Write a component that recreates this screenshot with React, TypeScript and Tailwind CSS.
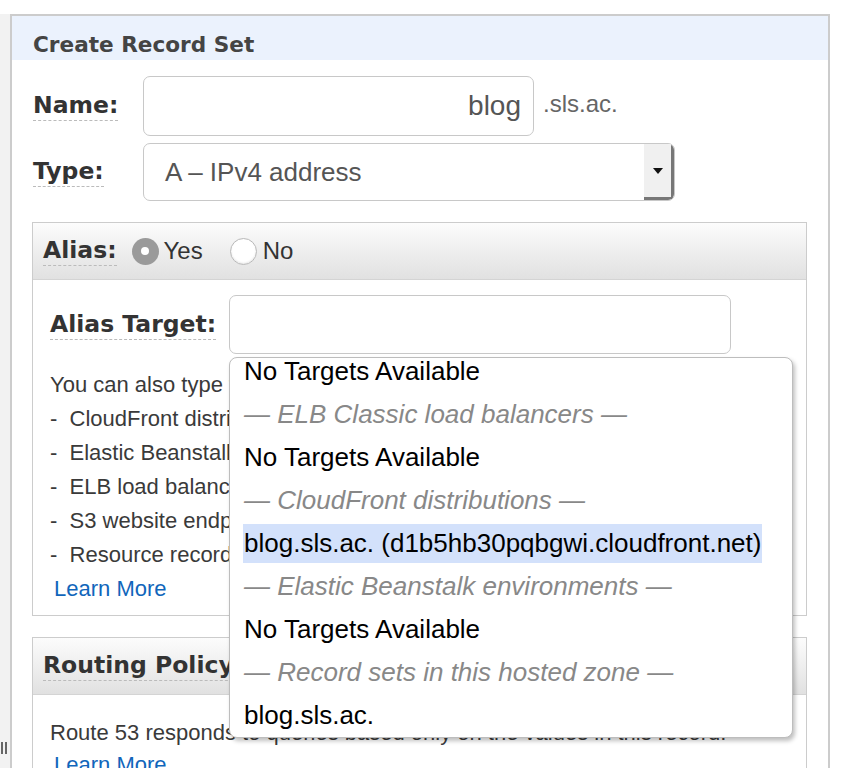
import React from "react";

const bold = { fontFamily: '"DejaVu Sans", Verdana, sans-serif' };
const sans = { fontFamily: '"Liberation Sans", Arial, Helvetica, sans-serif' };

function Label({ children }: { children: React.ReactNode }) {
  return (
    <span
      style={bold}
      className="inline-block whitespace-nowrap border-b border-dashed border-[#bbb] pb-[1px] text-[23.5px] font-bold leading-[28px] text-[#333]"
    >
      {children}
    </span>
  );
}

function BoxHeader({ children }: { children: React.ReactNode }) {
  return (
    <div className="flex h-[57px] items-center border-b border-[#d4d4d4] bg-gradient-to-b from-[#fcfcfc] to-[#e1e1e1] pl-[10px]">
      {children}
    </div>
  );
}

const options: { text: string; group?: boolean; selected?: boolean }[] = [
  { text: "No Targets Available" },
  { text: "— ELB Classic load balancers —", group: true },
  { text: "No Targets Available" },
  { text: "— CloudFront distributions —", group: true },
  { text: "blog.sls.ac. (d1b5hb30pqbgwi.cloudfront.net)", selected: true },
  { text: "— Elastic Beanstalk environments —", group: true },
  { text: "No Targets Available" },
  { text: "— Record sets in this hosted zone —", group: true },
  { text: "blog.sls.ac." },
];

export default function App() {
  return (
    <div style={sans} className="flex h-[768px] w-[850px] overflow-hidden bg-white pt-[14px]">
      <div className="flex w-[10px] flex-col bg-[#f2f2f2] pt-[728px]">
        <div className="flex gap-[2px] pl-[1px]">
          <span className="h-[12px] w-[2px] bg-[#666]" />
          <span className="h-[12px] w-[2px] bg-[#666]" />
        </div>
      </div>

      <div className="relative w-[820px] border-x-2 border-t-2 border-[#cccccc]">
        <div className="flex h-[44px] items-center bg-[#ebf2fd] pl-[21px] pt-[14px]">
          <span style={bold} className="text-[21.6px] font-bold text-[#444]">
            Create Record Set
          </span>
        </div>

        <div className="px-[20px] pt-[16px]">
          <div className="flex items-start">
            <div className="flex h-[60px] w-[111px] items-center pl-[1px]">
              <Label>Name:</Label>
            </div>
            <div className="flex h-[60px] w-[391px] items-center justify-end rounded-[7px] border border-[#c8c8c8] pr-[12px] text-[28px] text-[#555]">
              blog
            </div>
            <span className="ml-[9px] pt-[14px] text-[24px] leading-[28px] text-[#666]">.sls.ac.</span>
          </div>

          <div className="mt-[7px] flex items-start">
            <div className="flex h-[58px] w-[111px] items-center pl-[1px]">
              <Label>Type:</Label>
            </div>
            <div className="flex h-[58px] w-[532px] items-stretch overflow-hidden rounded-[7px] border border-[#c8c8c8]">
              <div className="flex flex-1 items-center pl-[21px] text-[26px] text-[#555]">A – IPv4 address</div>
              <div className="flex w-[30px] items-center justify-center border-b-[3px] border-r-[3px] border-[#777] bg-[#f0f0f0]">
                <svg width="10" height="6" viewBox="0 0 10 6">
                  <path d="M0 0 L10 0 L5 6 Z" fill="#111" />
                </svg>
              </div>
            </div>
          </div>

          <div className="mt-[21px] w-[775px] border border-[#cccccc]">
            <BoxHeader>
              <Label>Alias:</Label>
              <span className="ml-[15px] flex h-[27px] w-[27px] items-center justify-center rounded-full bg-[#9a9a9a]">
                <span className="h-[8px] w-[8px] rounded-full bg-white" />
              </span>
              <span className="ml-[5px] text-[24px] text-[#333]">Yes</span>
              <span className="ml-[27px] h-[27px] w-[27px] rounded-full border border-[#b8b8b8] bg-white shadow-[inset_0_-1px_2px_rgba(0,0,0,0.1)]" />
              <span className="ml-[6px] text-[24px] text-[#333]">No</span>
            </BoxHeader>
            <div className="pb-[9px] pl-[17px] pt-[15px]">
              <div className="flex items-center">
                <div className="w-[179px]">
                  <Label>Alias Target:</Label>
                </div>
                <div className="h-[59px] w-[502px] rounded-[7px] border border-[#c8c8c8]" />
              </div>
              <div className="mt-[14px] text-[22px] leading-[34px] text-[#3a3a3a]">
                <div>You can also type the domain name for the resource. Examples:</div>
                <div>-&nbsp;&nbsp;CloudFront distribution domain name</div>
                <div>-&nbsp;&nbsp;Elastic Beanstalk environment CNAME</div>
                <div>-&nbsp;&nbsp;ELB load balancer DNS name</div>
                <div>-&nbsp;&nbsp;S3 website endpoint</div>
                <div>-&nbsp;&nbsp;Resource record set in this hosted zone</div>
                <div className="pl-[4px] text-[#1166bb]">Learn More</div>
              </div>
            </div>
          </div>

          <div className="mt-[21px] w-[775px] border border-[#cccccc]">
            <BoxHeader>
              <Label>Routing Policy:</Label>
            </BoxHeader>
            <div className="pl-[17px] pt-[22px] text-[22px] leading-[32px] text-[#3a3a3a]">
              <div>Route 53 responds to queries based only on the values in this record.</div>
              <div className="pl-[4px] text-[#1166bb]">Learn More</div>
            </div>
          </div>
        </div>

        <div className="absolute left-[217px] top-[341px] h-[381px] w-[564px] overflow-hidden rounded-[8px] border border-[#bdbdbd] bg-white shadow-[2px_3px_4px_rgba(0,0,0,0.25)]">
          <div className="-mt-[8px] pl-[13px]">
            {options.map((o, i) => (
              <div key={i} className="flex h-[43px] items-center whitespace-nowrap">
                {o.selected ? (
                  <span className="inline-block h-[39px] bg-[#d3e1fb] pl-[1px] pr-[1px] text-[26px] leading-[39px] text-black">
                    {o.text}
                  </span>
                ) : (
                  <span className={o.group ? "pl-[1px] text-[26px] italic text-[#888]" : "pl-[1px] text-[26px] text-black"}>
                    {o.text}
                  </span>
                )}
              </div>
            ))}
          </div>
        </div>
      </div>
    </div>
  );
}
